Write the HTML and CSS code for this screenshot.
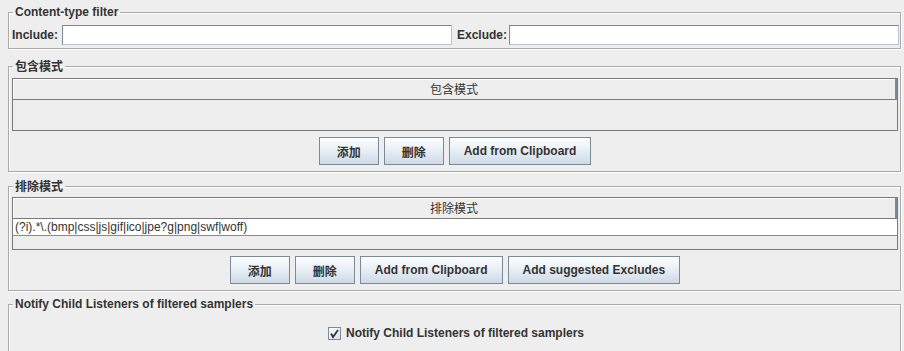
FILE: index.html
```html
<!DOCTYPE html>
<html lang="zh">
<head>
<meta charset="utf-8">
<title>Content-type filter</title>
<link rel="stylesheet" href="styles.css">
</head>
<body>
<fieldset class="group g-filter">
  <legend>Content-type filter</legend>
  <div class="filter-row">
    <label class="lbl">Include:</label>
    <input class="field" type="text">
    <label class="lbl lbl-ex">Exclude:</label>
    <input class="field" type="text">
  </div>
</fieldset>

<fieldset class="group g-include">
  <legend class="cjk">包含模式</legend>
  <div class="table t-include">
    <div class="thead cjk-n">包含模式</div>
    <div class="tbody"></div>
  </div>
  <div class="buttons">
    <button class="btn cjk">添加</button>
    <button class="btn cjk">删除</button>
    <button class="btn">Add from Clipboard</button>
  </div>
</fieldset>

<fieldset class="group g-exclude">
  <legend class="cjk">排除模式</legend>
  <div class="table t-exclude">
    <div class="thead cjk-n">排除模式</div>
    <div class="tbody">
      <div class="trow">(?i).*\.(bmp|css|js|gif|ico|jpe?g|png|swf|woff)</div>
    </div>
  </div>
  <div class="buttons">
    <button class="btn cjk">添加</button>
    <button class="btn cjk">删除</button>
    <button class="btn">Add from Clipboard</button>
    <button class="btn">Add suggested Excludes</button>
  </div>
</fieldset>

<fieldset class="group g-notify">
  <legend>Notify Child Listeners of filtered samplers</legend>
  <div class="check-row">
    <svg class="checkbox" width="13" height="13" viewBox="0 0 13 13">
      <defs>
        <linearGradient id="cbg" x1="0" y1="0" x2="1" y2="1">
          <stop offset="0" stop-color="#ffffff"/>
          <stop offset="1" stop-color="#d5dfea"/>
        </linearGradient>
      </defs>
      <rect x="0.5" y="0.5" width="12" height="12" fill="url(#cbg)" stroke="#7a8a99"/>
      <path d="M3 6.5 L5 10 L10 3" fill="none" stroke="#333" stroke-width="1.8"/>
    </svg>
    <span class="check-label">Notify Child Listeners of filtered samplers</span>
  </div>
</fieldset>
</body>
</html>
```

FILE: styles.css
```css
html, body {
  margin: 0;
  padding: 0;
  background: #eeeeee;
}

body {
  padding-top: 5px;
  font-family: "Liberation Sans", Arial, "Noto Sans CJK SC", sans-serif;
  font-size: 12px;
  color: #333333;
  display: flex;
  flex-direction: column;
}

.group {
  margin: 0 3px 0 8px;
  padding: 0;
  min-inline-size: 0;
  border: 1px solid #a9a9a9;
  box-shadow: inset 1px 1px 0 #ffffff, 1px 1px 0 #ffffff;
}

.group legend {
  margin-left: 1px;
  padding: 0 2px;
  font-weight: bold;
  font-size: 12px;
  line-height: 14px;
  color: #333333;
}

.cjk {
  font-family: "Noto Sans CJK SC", "Liberation Sans", sans-serif;
  font-weight: bold;
}

.cjk-n {
  font-family: "Noto Sans CJK SC", "Liberation Sans", sans-serif;
  font-weight: normal;
}

/* filter row */
.g-filter {
  padding: 6px 1px 3px 3px;
  margin-bottom: 10px;
}

.filter-row {
  display: flex;
  align-items: center;
}

.lbl {
  font-weight: bold;
  margin-right: 4px;
}

.lbl-ex {
  margin-left: 5px;
  margin-right: 2px;
}

.field {
  flex: 1;
  min-width: 0;
  height: 20px;
  box-sizing: border-box;
  margin: 0;
  padding: 0 2px;
  background: #ffffff;
  border: 1px solid #7a8a99;
  border-right-color: #b8c4cf;
  border-bottom-color: #b8c4cf;
  outline: none;
}

/* tables */
.g-include {
  padding: 5px 2px 6px 3px;
  margin-bottom: 7px;
}

.g-exclude {
  padding: 4px 2px 6px 3px;
  margin-bottom: 6px;
}

.table {
  border: 1px solid #7a7a7a;
  display: flex;
  flex-direction: column;
}

.thead {
  height: 20px;
  line-height: 20px;
  text-align: center;
  font-size: 12px;
  color: #333333;
  border-bottom: 1px solid #7a7a7a;
  border-right: 2px solid #7a8a99;
  background: #eeeeee;
  box-shadow: inset 1px 1px 0 #ffffff;
}

.t-include .tbody {
  height: 30px;
}

.t-exclude .tbody {
  height: 30px;
}

.trow {
  height: 16px;
  line-height: 16px;
  padding-left: 2px;
  background: #ffffff;
  border-bottom: 1px solid #8a8a8a;
  font-size: 12px;
  color: #333333;
}

/* buttons */
.buttons {
  display: flex;
  justify-content: center;
  gap: 5px;
  margin-top: 6px;
}

.btn {
  height: 28px;
  padding: 0 14px;
  margin: 0;
  font-family: "Liberation Sans", Arial, sans-serif;
  font-weight: bold;
  font-size: 12px;
  color: #333333;
  border: 1px solid #7a8a99;
  border-radius: 0;
  background: linear-gradient(#fdfeff 0%, #eef3f8 35%, #dae4ee 75%, #cdd9e5 100%);
}

.btn.cjk {
  font-family: "Noto Sans CJK SC", "Liberation Sans", sans-serif;
  padding: 0 17px;
}

/* notify */
.g-notify {
  padding: 15px 0 20px 0;
}

.g-notify legend {
  margin-left: 4px;
}

.check-row {
  display: flex;
  justify-content: center;
  align-items: center;
  gap: 5px;
  padding-left: 3px;
}

.checkbox {
  display: block;
}

.check-label {
  font-weight: bold;
  font-size: 12px;
  color: #333333;
}
```
